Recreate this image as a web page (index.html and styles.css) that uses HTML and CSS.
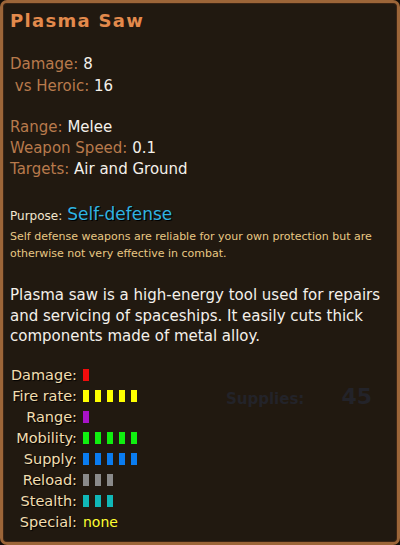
FILE: index.html
```html
<!DOCTYPE html>
<html>
<head>
<meta charset="utf-8">
<link rel="stylesheet" href="styles.css">
</head>
<body>
<div class="tooltip">
  <div class="ghost">Supplies: <span class="ghost-num">45</span></div>
  <h1 class="title">Plasma Saw</h1>

  <div class="group group-dmg">
    <div class="line"><span class="lbl">Damage:</span> <span class="val">8</span></div>
    <div class="line"><span class="lbl">&nbsp;vs Heroic:</span> <span class="val">16</span></div>
  </div>

  <div class="group group-info">
    <div class="line"><span class="lbl">Range:</span> <span class="val">Melee</span></div>
    <div class="line"><span class="lbl">Weapon Speed:</span> <span class="val">0.1</span></div>
    <div class="line"><span class="lbl">Targets:</span> <span class="val">Air and Ground</span></div>
  </div>

  <div class="purpose">
    <div class="purpose-line"><span class="purpose-lbl">Purpose:</span> <span class="purpose-val">Self-defense</span></div>
    <p class="purpose-desc">Self defense weapons are reliable for your own protection but are otherwise not very effective in combat.</p>
  </div>

  <p class="desc">Plasma saw is a high-energy tool used for repairs and servicing of spaceships. It easily cuts thick components made of metal alloy.</p>

  <div class="stats">
    <div class="stat"><span class="slbl">Damage:</span><span class="bars"><i class="bar red"></i></span></div>
    <div class="stat"><span class="slbl">Fire rate:</span><span class="bars"><i class="bar yellow"></i><i class="bar yellow"></i><i class="bar yellow"></i><i class="bar yellow"></i><i class="bar yellow"></i></span></div>
    <div class="stat"><span class="slbl">Range:</span><span class="bars"><i class="bar purple"></i></span></div>
    <div class="stat"><span class="slbl">Mobility:</span><span class="bars"><i class="bar green"></i><i class="bar green"></i><i class="bar green"></i><i class="bar green"></i><i class="bar green"></i></span></div>
    <div class="stat"><span class="slbl">Supply:</span><span class="bars"><i class="bar blue"></i><i class="bar blue"></i><i class="bar blue"></i><i class="bar blue"></i><i class="bar blue"></i></span></div>
    <div class="stat"><span class="slbl">Reload:</span><span class="bars"><i class="bar gray"></i><i class="bar gray"></i><i class="bar gray"></i></span></div>
    <div class="stat"><span class="slbl">Stealth:</span><span class="bars"><i class="bar teal"></i><i class="bar teal"></i><i class="bar teal"></i></span></div>
    <div class="stat"><span class="slbl">Special:</span><span class="none">none</span></div>
  </div>
</div>
</body>
</html>
```
FILE: styles.css
```css
html, body {
  margin: 0;
  padding: 0;
  background: #120d08;
}
.tooltip {
  position: relative;
  box-sizing: border-box;
  width: 400px;
  height: 545px;
  background: #211910;
  border: 3px solid #9c6538;
  border-radius: 7px;
  box-shadow: inset 0 0 0 1px #3a2414;
  padding: 7px 7px 0 7px;
  font-family: "DejaVu Sans", Verdana, sans-serif;
  overflow: hidden;
}
.ghost {
  position: absolute;
  left: 223px;
  top: 381px;
  font-family: "DejaVu Sans", sans-serif;
  font-weight: bold;
  font-size: 15px;
  color: #232329;
}
.ghost-num {
  margin-left: 32px;
  font-size: 22px;
}
.title {
  margin: 0;
  font-size: 18px;
  font-weight: bold;
  letter-spacing: 1.3px;
  color: #e38a4c;
  line-height: 22px;
}
.group-dmg {
  margin-top: 21px;
}
.group-dmg .line {
  line-height: 22px;
}
.group-info {
  margin-top: 20px;
}
.line {
  font-size: 15px;
  line-height: 21px;
}
.lbl {
  color: #b87a4c;
}
.val {
  color: #f4f0ea;
}
.purpose {
  margin-top: 23px;
}
.purpose-line {
  line-height: 22px;
}
.purpose-lbl {
  font-size: 12px;
  color: #f2e6d0;
}
.purpose-val {
  font-size: 17px;
  color: #2fb4e2;
  text-shadow: 1px 1px 0 #000;
}
.purpose-desc {
  margin: 1px 0 0;
  font-size: 11px;
  line-height: 17px;
  color: #e8c884;
}
.desc {
  margin: 23px 0 0;
  font-size: 15px;
  line-height: 20.5px;
  color: #f4f0ea;
}
.stats {
  margin-top: 18px;
}
.stat {
  display: grid;
  grid-template-columns: 67px auto;
  column-gap: 6px;
  align-items: center;
  height: 21px;
}
.slbl {
  text-align: right;
  font-size: 14.5px;
  color: #f2deb0;
  text-shadow: 1px 1px 1px #000;
  white-space: nowrap;
}
.bars {
  display: flex;
  gap: 6px;
}
.bar {
  display: block;
  width: 6px;
  height: 12px;
}
.red { background: #f20c0c; }
.yellow { background: #ffff00; }
.purple { background: #a812c8; }
.green { background: #10f010; }
.blue { background: #0a7cf0; }
.gray { background: #8a8a8a; }
.teal { background: #10b8b8; }
.none {
  font-size: 14px;
  color: #ffff30;
}
```
